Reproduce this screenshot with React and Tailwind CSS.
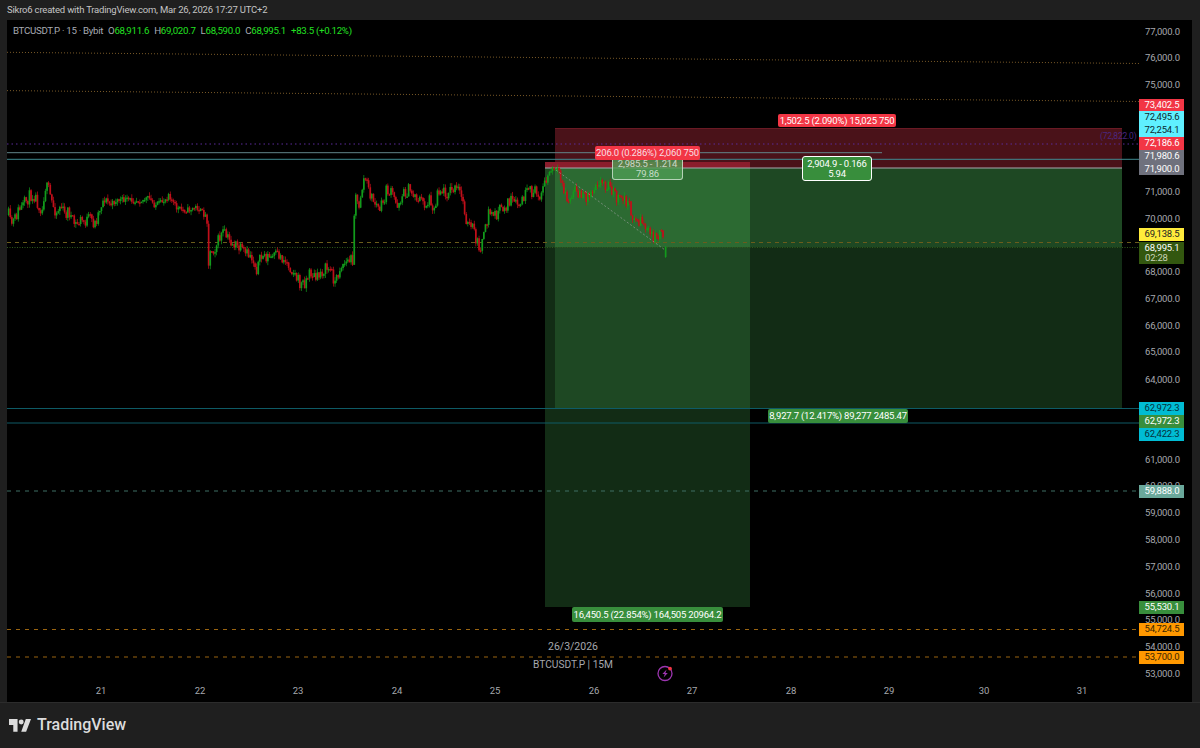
const FONT = "font-['Roboto','Noto_Sans',sans-serif]";

const pts = [[8,215],[10,225],[14,220],[18,210],[22,207],[26,200],[30,195],[34,195],[38,205],[42,210],[44,186],[48,190],[52,205],[56,212],[60,205],[64,215],[68,210],[72,222],[76,225],[80,220],[84,222],[90,218],[94,225],[98,212],[100,205],[104,198],[110,205],[116,200],[122,200],[130,200],[136,200],[142,200],[148,198],[154,205],[160,203],[166,198],[168,193],[172,202],[176,208],[182,210],[188,210],[196,207],[204,215],[207,218],[208,262],[210,250],[214,248],[218,240],[222,232],[228,240],[234,245],[240,250],[245,255],[250,255],[256,268],[262,255],[270,258],[278,255],[286,262],[292,270],[296,278],[300,285],[304,282],[310,272],[316,280],[320,272],[326,268],[330,270],[335,283],[340,265],[346,262],[350,260],[353,258],[354,182],[358,215],[360,195],[364,176],[368,190],[372,200],[376,205],[378,210],[382,205],[386,190],[392,195],[396,205],[402,195],[408,190],[414,195],[420,200],[425,205],[430,198],[434,212],[437,188],[445,193],[452,190],[458,190],[462,200],[467,225],[472,228],[474,235],[478,248],[480,245],[484,235],[488,212],[495,215],[500,210],[506,205],[510,200],[514,205],[520,205],[524,195],[530,192],[534,192],[538,195],[544,185],[548,175],[552,170],[556,172],[560,180],[565,195],[568,203],[572,195],[576,190],[582,197],[588,195],[592,190],[596,180],[602,183],[608,186],[612,190],[616,198],[620,200],[624,198],[628,205],[632,215],[636,222],[640,220],[644,225],[648,233],[652,236],[656,238],[660,228],[664,240],[665,246]];

function buildCandles() {
  let seed = 11;
  const rnd = () => { seed = (seed * 16807) % 2147483647; return seed / 2147483647; };
  const at = (x) => {
    for (let i = 1; i < pts.length; i++) {
      if (x <= pts[i][0]) {
        const [a, b] = pts[i - 1];
        const [c, d] = pts[i];
        return b + ((x - a) / (c - a || 1)) * (d - b);
      }
    }
    return pts[pts.length - 1][1];
  };
  const out = [];
  let prev = at(8);
  for (let x = 8; x <= 664; x += 1.6) {
    const wobble = x > 105 && x < 205 ? 6 : 13;
    const close = at(x) + (rnd() - 0.5) * wobble;
    const top = Math.min(prev, close);
    const bottom = Math.max(prev, close);
    out.push({
      x,
      up: close < prev,
      top,
      h: Math.max(bottom - top, 1.5),
      hi: top - rnd() * 4,
      lo: bottom + rnd() * 4,
    });
    prev = close;
  }
  out.push({ x: 665, up: true, top: 247, h: 10, hi: 246, lo: 258 });
  return out;
}

const candles = buildCandles();

const axis = [
  ["77,000.0", 32], ["76,000.0", 58], ["75,000.0", 85], ["71,000.0", 192], ["70,000.0", 219],
  ["68,000.0", 272], ["67,000.0", 299], ["66,000.0", 326], ["65,000.0", 352], ["64,000.0", 380],
  ["61,000.0", 460], ["60,000.0", 486], ["59,000.0", 513], ["58,000.0", 540], ["57,000.0", 567],
  ["56,000.0", 594], ["55,000.0", 620], ["54,000.0", 647], ["53,000.0", 674],
];

const days = [["21", 101], ["22", 200], ["23", 298], ["24", 397], ["25", 495], ["26", 594], ["27", 692], ["28", 791], ["29", 889], ["30", 984], ["31", 1082]];

const tags = [
  ["73,402.5", 99, 12, "bg-[#f23645] text-white"],
  ["72,495.6", 111, 13, "bg-[#5ff0ff] text-[#0b2a30]"],
  ["72,254.1", 124, 13, "bg-[#5ff0ff] text-[#0b2a30]"],
  ["72,186.6", 137, 13, "bg-[#f23645] text-white"],
  ["71,980.6", 150, 13, "bg-[#6f717d] text-white"],
  ["71,900.0", 163, 12, "bg-[#6f717d] text-white"],
  ["69,138.5", 228, 13, "bg-[#ffeb3b] text-[#222]"],
  ["62,972.3", 402, 13, "bg-[#00bcd4] text-[#06303a]"],
  ["62,972.3", 415, 13, "bg-[#388e3c] text-white"],
  ["62,422.3", 428, 13, "bg-[#00bcd4] text-[#06303a]"],
  ["59,888.0", 485, 13, "bg-[#6aa89b] text-white"],
  ["55,530.1", 601, 13, "bg-[#388e3c] text-white"],
  ["54,724.5", 623, 13, "bg-[#ff9800] text-[#3a2500]"],
  ["53,700.0", 651, 13, "bg-[#ff9800] text-[#3a2500]"],
];

function Chart() {
  return (
    <svg className="absolute top-0 left-0 h-[682px] w-[1185px]" viewBox="7 20 1185 682">
      <rect x="555" y="128" width="567" height="40" fill="#4a1219" />
      <rect x="555" y="128" width="567" height="1" fill="#6a1a24" />
      <rect x="545" y="162" width="205" height="6" fill="#8b1d2c" />
      <rect x="545" y="168" width="577" height="79" fill="#1e4823" />
      <rect x="555" y="168" width="195" height="79" fill="#2c6a32" />
      <rect x="750" y="247" width="372" height="161" fill="#122c15" />
      <rect x="545" y="247" width="10" height="360" fill="#122c15" />
      <rect x="555" y="247" width="195" height="161" fill="#1e4823" />
      <rect x="555" y="408" width="195" height="199" fill="#122c15" />
      <rect x="750" y="408" width="372" height="1" fill="#1e5a28" />

      <line x1="7" y1="52.3" x2="1140" y2="63.5" stroke="#7a5a28" strokeDasharray="1 2" />
      <line x1="7" y1="90.6" x2="1140" y2="101.5" stroke="#7a5a28" strokeDasharray="1 2" />
      <line x1="7" y1="144" x2="1139" y2="144" stroke="#5b2a9a" strokeDasharray="1.5 3" />
      <line x1="7" y1="152.7" x2="882" y2="152.7" stroke="#62858a" />
      <line x1="7" y1="159.3" x2="1139" y2="159.3" stroke="#3f8a90" />
      <line x1="545" y1="168" x2="1122" y2="168" stroke="#a7aab0" />
      <line x1="7" y1="242.5" x2="1139" y2="242.5" stroke="#6b5c1c" strokeDasharray="4 4" />
      <line x1="7" y1="247.5" x2="1139" y2="247.5" stroke="#2f5a1a" strokeDasharray="1 1.5" />
      <line x1="7" y1="408.5" x2="1139" y2="408.5" stroke="#0e5b66" />
      <line x1="7" y1="423" x2="1139" y2="423" stroke="#0e5b66" />
      <line x1="7" y1="491" x2="1139" y2="491" stroke="#3f6f65" strokeDasharray="4 5" />
      <line x1="7" y1="629.5" x2="1139" y2="629.5" stroke="#9a6410" strokeDasharray="4 5" />
      <line x1="7" y1="657" x2="1139" y2="657" stroke="#9a6410" strokeDasharray="4 5" />

      {candles.map((c, i) => (
        <g key={i} fill={c.up ? "#129a1c" : "#c00f1a"}>
          <rect x={c.x + 0.3} y={c.hi} width="0.7" height={c.lo - c.hi} />
          <rect x={c.x - 0.2} y={c.top} width="1.7" height={c.h} />
        </g>
      ))}

      <line x1="556" y1="170" x2="665" y2="250" stroke="#8f9a92" strokeOpacity="0.7" strokeDasharray="2 2" />
    </svg>
  );
}

function Bubble({ x, y, w, h, className, children }) {
  return (
    <div
      className={"absolute flex flex-col items-center justify-center rounded-[2px] text-[9.5px] leading-[9.5px] tracking-[-0.2px] whitespace-nowrap " + className}
      style={{ left: x - 7, top: y - 20, width: w, height: h }}
    >
      {children}
    </div>
  );
}

export default function App() {
  return (
    <div className={"flex h-[748px] w-[1200px] flex-col overflow-hidden bg-[#1f1f1f] " + FONT}>
      <div className="flex h-5 flex-none items-center pl-[7px] text-[9.5px] tracking-[-0.2px] text-[#c4c4c4]">
        Sikro6 created with TradingView.com, Mar 26, 2026 17:27 UTC+2
      </div>

      <div className="relative mr-2 ml-[7px] h-[682px] flex-none overflow-hidden bg-black">
        <Chart />

        <div className="absolute top-[5px] left-[6px] flex gap-[5px] text-[9.7px] leading-3 tracking-[-0.3px] whitespace-nowrap text-[#a8abb3]">
          <span>BTCUSDT.P · 15 · Bybit</span>
          <span>O<span className="text-[#22e022]">68,911.6</span></span>
          <span>H<span className="text-[#22e022]">69,020.7</span></span>
          <span>L<span className="text-[#22e022]">68,590.0</span></span>
          <span>C<span className="text-[#22e022]">68,995.1</span></span>
          <span className="text-[#22e022]">+83.5 (+0.12%)</span>
        </div>

        {axis.map(([t, y]) => (
          <div key={t} className="absolute left-[1138px] text-[9.5px] leading-3 tracking-[-0.2px] text-[#a6a8ae]" style={{ top: y - 26 }}>
            {t}
          </div>
        ))}

        {tags.map(([t, y, h, cls], i) => (
          <div
            key={i}
            className={"absolute left-[1132px] flex w-[45px] items-center justify-center pl-[1px] text-[9.5px] tracking-[-0.2px] " + cls}
            style={{ top: y - 20, height: h }}
          >
            {t}
          </div>
        ))}

        <div className="absolute top-[222px] left-[1132px] flex h-[22px] w-[45px] flex-col items-center justify-center bg-[#33570f] text-[9.5px] leading-[10.5px] tracking-[-0.2px]">
          <span className="pl-[1px] text-white">68,995.1</span>
          <span className="w-full pl-[6px] text-[#c9d3b8]">02:28</span>
        </div>

        {days.map(([t, x]) => (
          <div key={t} className="absolute top-[665px] w-6 text-center text-[9.5px] leading-3 text-[#a6a8ae]" style={{ left: x - 19 }}>
            {t}
          </div>
        ))}

        <div className="absolute top-[110px] left-[1093px] text-[8.5px] leading-3 tracking-[-0.2px] text-[#4a2680]">(72,822.0)</div>

        <Bubble x={612} y={157} w={71} h={23} className="rounded-[3px] border border-white/60 bg-[#4f9c54]/80 text-white/70">
          <span>2,985.5 - 1.214</span>
          <span>79.86</span>
        </Bubble>
        <Bubble x={595} y={146} w={105} h={14} className="bg-[#f23645] text-[#f8dfe2]">206.0 (0.286%) 2,060 750</Bubble>
        <Bubble x={778} y={114} w={118} h={13} className="bg-[#f23645] text-white">1,502.5 (2.090%) 15,025 750</Bubble>
        <Bubble x={802} y={156} w={70} h={25} className="rounded-[3px] border border-white bg-[#388e3c] text-white">
          <span>2,904.9 - 0.166</span>
          <span>5.94</span>
        </Bubble>
        <Bubble x={768} y={409} w={140} h={14} className="bg-[#388e3c] text-white">8,927.7 (12.417%) 89,277 2485.47</Bubble>
        <Bubble x={572} y={607} w={151} h={15} className="bg-[#388e3c] text-white">16,450.5 (22.854%) 164,505 20964.2</Bubble>

        <div className="absolute top-[620px] left-[516px] w-[100px] text-center text-[10.5px] leading-[14px] text-[#a6a8ae]">26/3/2026</div>
        <div className="absolute top-[639px] left-[516px] w-[100px] text-center text-[10.2px] leading-3 whitespace-nowrap text-[#a6a8ae]">BTCUSDT.P | 15M</div>

        <svg className="absolute top-[644px] left-[649px] h-[18px] w-[18px]" viewBox="0 0 18 18">
          <circle cx="9" cy="9.5" r="7" fill="none" stroke="#9c35b0" strokeWidth="1.3" />
          <path d="M10.6 5.6 6.4 10h2.4l-1.2 3.4L11.8 9H9.4z" fill="#9c35b0" />
          <circle cx="14" cy="4.6" r="1.9" fill="#f23645" />
        </svg>
      </div>

      <div className="flex flex-1 items-center gap-[6px] border-t border-[#2c2c2c] pb-[1px] pl-[9px]">
        <svg className="h-[14px] w-[22px]" viewBox="0 0 36 22" fill="#dcdcdc">
          <path d="M14 22H7V11H0V1h14v21zM28 22h-8l7.5-21H36L28 22z" />
          <circle cx="20" cy="6" r="4" />
        </svg>
        <span className="text-[16px] leading-none font-medium text-[#dcdcdc]">TradingView</span>
      </div>
    </div>
  );
}
